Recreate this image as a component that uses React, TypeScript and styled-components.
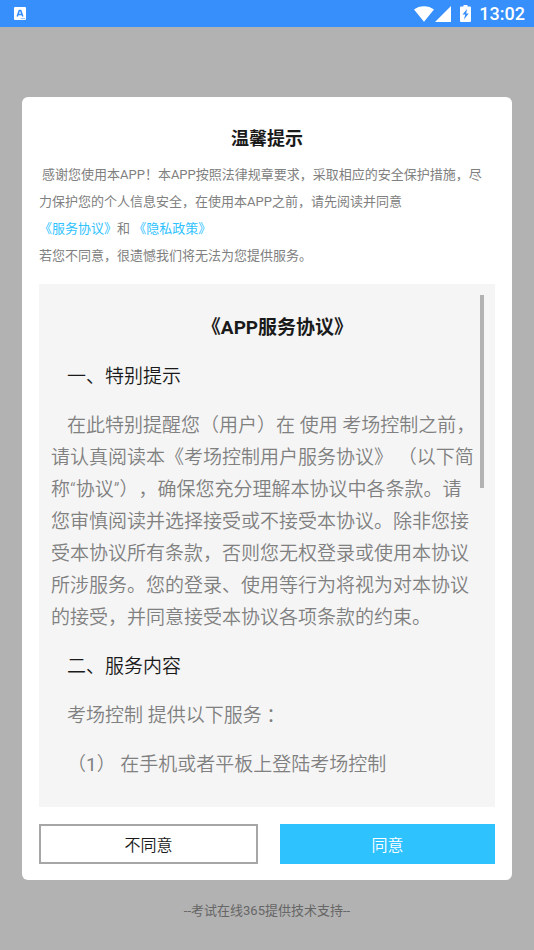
import React from 'react';
import styled, { createGlobalStyle } from 'styled-components';

const GlobalStyle = createGlobalStyle`
  * { box-sizing: border-box; }
  body {
    margin: 0;
    background: #b2b2b2;
    font-family: Roboto, "Noto Sans CJK SC", sans-serif;
    text-spacing-trim: space-all;
  }
`;

const Screen = styled.div`
  display: flex;
  flex-direction: column;
  height: 100vh;
`;

const StatusBar = styled.header`
  display: flex;
  align-items: center;
  justify-content: space-between;
  height: 27px;
  flex: none;
  padding: 0 9px 0 14px;
  background: #368ffa;
  color: #fff;
`;

const StatusIcons = styled.div`
  display: flex;
  align-items: center;
`;

const BatteryIcon = styled.svg`
  margin: 0 8px 0 9px;
`;

const Clock = styled.time`
  font-size: 18px;
  line-height: 27px;
  font-weight: 500;
`;

const Dialog = styled.main`
  display: flex;
  flex-direction: column;
  flex: 1;
  min-height: 0;
  margin: 70px 22px 0;
  padding: 28px 17px 16px;
  border-radius: 6px;
  background: #fff;
`;

const DialogTitle = styled.h1`
  margin: 0 0 9px;
  font-size: 18px;
  line-height: 27px;
  font-weight: 700;
  text-align: center;
  color: #1a1a1a;
`;

const Intro = styled.p<{ $lead?: boolean }>`
  margin: 0;
  text-indent: ${({ $lead }) => ($lead ? '3px' : '0')};
  font-size: 13px;
  line-height: 27px;
  color: #808080;
`;

const PolicyLink = styled.a`
  color: #2ec2ff;
  text-decoration: none;
`;

const Panel = styled.section`
  position: relative;
  display: flex;
  flex: 1;
  min-height: 0;
  margin: 15px 0 17px;
  background: #f5f5f5;
`;

const Scroller = styled.div`
  flex: 1;
  overflow-y: auto;
  scrollbar-width: none;
  padding: 28px 15px 16px 12px;
  font-size: 19px;
  font-weight: 350;
  line-height: 32px;
`;

const ScrollThumb = styled.div`
  position: absolute;
  top: 11px;
  right: 11px;
  width: 4px;
  height: 193px;
  background: #b2b2b2;
`;

const AgreementTitle = styled.h2`
  margin: 0 0 17px;
  font-size: 19px;
  font-weight: 700;
  text-align: center;
  text-indent: 24px;
  color: #1a1a1a;
`;

const SectionTitle = styled.h3`
  margin: 0 0 17px;
  font-size: 19px;
  font-weight: 350;
  text-indent: 16px;
  color: #1a1a1a;
`;

const Paragraph = styled.p`
  margin: 0 0 17px;
  text-indent: 16px;
  color: #808080;
`;

const Numeral = styled.span`
  font-weight: 400;
`;

const Actions = styled.div`
  display: flex;
  gap: 22px;
`;

const ActionButton = styled.button<{ $primary?: boolean }>`
  flex: 1;
  height: 40px;
  padding: 0;
  border: ${({ $primary }) => ($primary ? '0' : '2px solid #a6a6a6')};
  background: ${({ $primary }) => ($primary ? '#2ec2ff' : '#fff')};
  color: ${({ $primary }) => ($primary ? '#fff' : '#1a1a1a')};
  font-family: inherit;
  font-size: 16px;
  font-weight: 350;
  cursor: pointer;
`;

const Footer = styled.footer`
  flex: none;
  height: 70px;
  padding-top: 17px;
  font-size: 13px;
  line-height: 27px;
  text-align: center;
  color: #666;
`;

export default function App() {
  return (
    <>
      <GlobalStyle />
      <Screen>
        <StatusBar>
          <svg width="12" height="13" viewBox="0 0 12 13" aria-hidden="true">
            <rect width="12" height="13" rx="1" fill="#fff" />
            <path d="M3.2 9.5 5.3 3.5h1.4l2.1 6M4.2 7.5h3.6" fill="none" stroke="#368ffa" strokeWidth="1.6" />
            <path d="M6.5 11.6h4.5" stroke="#8fc0fc" strokeWidth="1" />
          </svg>
          <StatusIcons>
            <svg width="20" height="16" viewBox="0 0 20 16" aria-hidden="true">
              <path d="M0 3.6C2.8 1.4 6 .2 10 .2s7.2 1.2 10 3.4L10 15.8z" fill="#fff" />
            </svg>
            <svg width="17" height="16" viewBox="0 0 17 16" aria-hidden="true">
              <path d="M17 0v16H1z" fill="#fff" />
            </svg>
            <BatteryIcon width="11" height="17" viewBox="0 0 11 17" aria-hidden="true">
              <path d="M3.5 0h4v1.6H10a1 1 0 0 1 1 1V16a1 1 0 0 1-1 1H1a1 1 0 0 1-1-1V2.6a1 1 0 0 1 1-1h2.5z" fill="#fff" />
              <path d="M7 4 2.5 9.5h2.7L4 14.5l4.7-6H6.2z" fill="#368ffa" />
            </BatteryIcon>
            <Clock>13:02</Clock>
          </StatusIcons>
        </StatusBar>

        <Dialog>
          <DialogTitle>温馨提示</DialogTitle>
          <Intro $lead>
            感谢您使用本APP！本APP按照法律规章要求，采取相应的安全保护措施，尽
            <br />
            力保护您的个人信息安全，在使用本APP之前，请先阅读并同意
          </Intro>
          <Intro>
            <PolicyLink href="#service">《服务协议》</PolicyLink>和 <PolicyLink href="#privacy">《隐私政策》</PolicyLink>
          </Intro>
          <Intro>若您不同意，很遗憾我们将无法为您提供服务。</Intro>

          <Panel>
            <Scroller>
              <AgreementTitle>《APP服务协议》</AgreementTitle>
              <SectionTitle>一、特别提示</SectionTitle>
              <Paragraph>
                在此特别提醒您（用户）在 使用 考场控制之前，请认真阅读本《考场控制用户服务协议》 （以下简称“协议”），确保您充分理解本协议中各条款。请您审慎阅读并选择接受或不接受本协议。除非您接受本协议所有条款，否则您无权登录或使用本协议所涉服务。您的登录、使用等行为将视为对本协议的接受，并同意接受本协议各项条款的约束。
              </Paragraph>
              <SectionTitle>二、服务内容</SectionTitle>
              <Paragraph>考场控制 提供以下服务 ：</Paragraph>
              <Paragraph>
                （<Numeral>1</Numeral>） 在手机或者平板上登陆考场控制
              </Paragraph>
            </Scroller>
            <ScrollThumb />
          </Panel>

          <Actions>
            <ActionButton type="button">不同意</ActionButton>
            <ActionButton type="button" $primary>同意</ActionButton>
          </Actions>
        </Dialog>

        <Footer>--考试在线365提供技术支持--</Footer>
      </Screen>
    </>
  );
}
